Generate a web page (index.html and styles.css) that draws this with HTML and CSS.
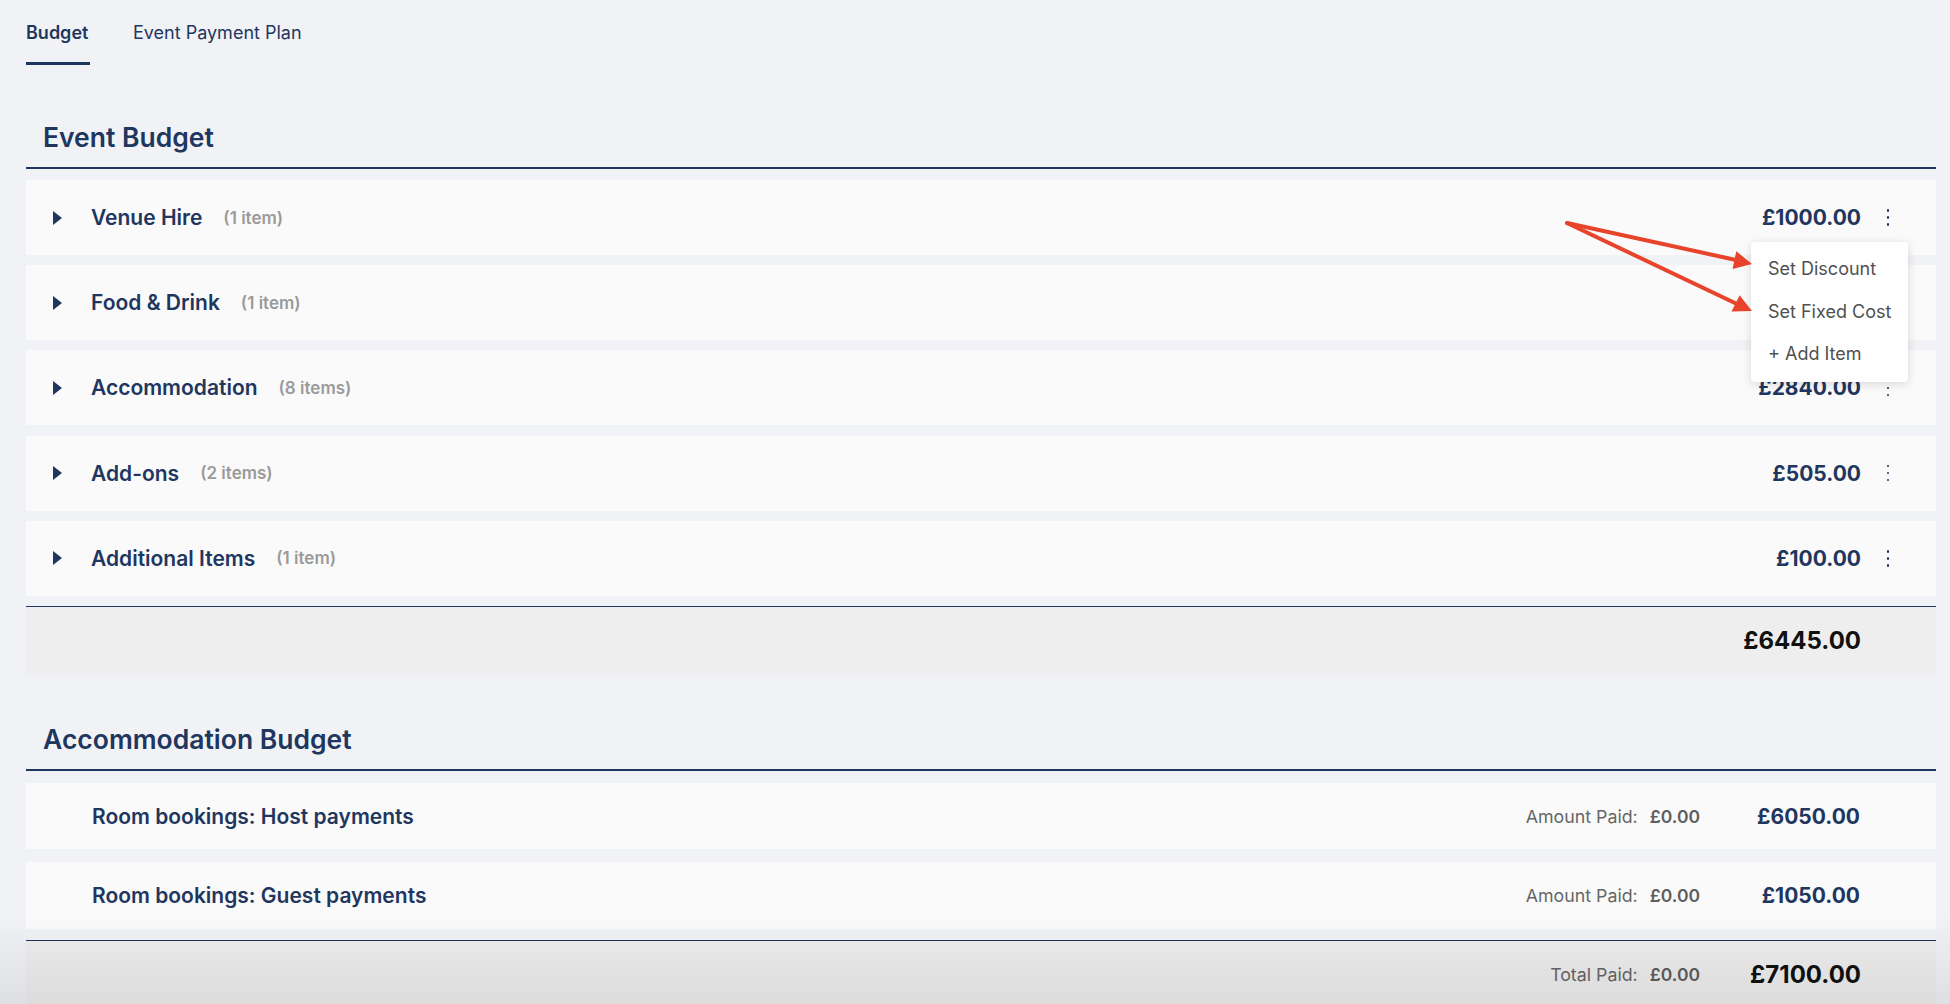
FILE: index.html
```html
<!DOCTYPE html>
<html lang="en">
<head>
<meta charset="utf-8">
<title>Budget</title>
<link rel="stylesheet" href="styles.css">
</head>
<body>
<div class="page">
  <nav class="tabs">
    <div class="tab tab-active">Budget</div>
    <div class="tab">Event Payment Plan</div>
  </nav>

  <section class="section section-event">
    <h2 class="section-title">Event Budget</h2>
    <div class="rows">
      <div class="row row-open">
        <span class="caret"></span>
        <span class="row-title">Venue Hire</span>
        <span class="row-count">(1 item)</span>
        <span class="row-amount">£1000.00</span>
        <span class="kebab"><i></i><i></i><i></i></span>
        <div class="menu">
          <div class="menu-item">Set Discount</div>
          <div class="menu-item">Set Fixed Cost</div>
          <div class="menu-item">+ Add Item</div>
        </div>
      </div>
      <div class="row">
        <span class="caret"></span>
        <span class="row-title">Food &amp; Drink</span>
        <span class="row-count">(1 item)</span>
        <span class="row-amount row-amount-hidden">£2000.00</span>
        <span class="kebab kebab-hidden"><i></i><i></i><i></i></span>
      </div>
      <div class="row">
        <span class="caret"></span>
        <span class="row-title">Accommodation</span>
        <span class="row-count">(8 items)</span>
        <span class="row-amount">£2840.00</span>
        <span class="kebab"><i></i><i></i><i></i></span>
      </div>
      <div class="row">
        <span class="caret"></span>
        <span class="row-title">Add-ons</span>
        <span class="row-count">(2 items)</span>
        <span class="row-amount">£505.00</span>
        <span class="kebab"><i></i><i></i><i></i></span>
      </div>
      <div class="row">
        <span class="caret"></span>
        <span class="row-title">Additional Items</span>
        <span class="row-count">(1 item)</span>
        <span class="row-amount">£100.00</span>
        <span class="kebab"><i></i><i></i><i></i></span>
      </div>
    </div>
    <div class="total total-event">
      <span class="total-amount">£6445.00</span>
    </div>
  </section>

  <section class="section section-acc">
    <h2 class="section-title">Accommodation Budget</h2>
    <div class="rows rows-acc">
      <div class="row row-acc">
        <span class="row-title">Room bookings: Host payments</span>
        <span class="paid-label">Amount Paid:</span>
        <span class="paid-value">£0.00</span>
        <span class="acc-amount">£6050.00</span>
      </div>
      <div class="row row-acc">
        <span class="row-title">Room bookings: Guest payments</span>
        <span class="paid-label">Amount Paid:</span>
        <span class="paid-value">£0.00</span>
        <span class="acc-amount">£1050.00</span>
      </div>
    </div>
    <div class="total total-acc">
      <span class="paid-label">Total Paid:</span>
      <span class="paid-value">£0.00</span>
      <span class="total-amount">£7100.00</span>
    </div>
  </section>
</div>

<svg class="annotation" width="1950" height="1004" viewBox="0 0 1950 1004">
  <g stroke="#e8432b" stroke-width="4" stroke-linecap="round" fill="none">
    <line x1="1567" y1="223" x2="1736" y2="260"/>
    <line x1="1567" y1="223" x2="1737" y2="304"/>
  </g>
  <g fill="#e8432b">
    <polygon points="1752,264 1732.5,269 1736.3,251.3"/>
    <polygon points="1752,311 1731.5,311.5 1739.6,295.2"/>
  </g>
</svg>
<div class="bottom-fade"></div>
</body>
</html>
```

FILE: styles.css
```css
html, body {
  margin: 0;
  padding: 0;
  overflow: hidden;
}
body {
  background: #f0f2f5;
  font-family: Inter, "Noto Sans", "Liberation Sans", sans-serif;
  color: #1f365f;
  height: 1004px;
  position: relative;
}
.page {
  padding: 0 14px 0 26px;
}

/* Tabs */
.tabs {
  display: flex;
  gap: 43px;
  height: 65px;
}
.tab {
  font-size: 18px;
  line-height: 22px;
  padding-top: 22px;
  color: #1f365f;
  box-sizing: border-box;
  height: 65px;
}
.tab-active {
  font-weight: 600;
  border-bottom: 3px solid #1f365f;
  width: 64px;
}

/* Section */
.section-title {
  margin: 0;
  font-size: 26.5px;
  line-height: 34px;
  font-weight: 600;
  padding: 0 0 13px 17px;
  border-bottom: 2px solid #1f365f;
  color: #1f365f;
}
.section-event {
  margin-top: 55px;
}
.section-acc {
  margin-top: 47px;
}

.rows {
  display: flex;
  flex-direction: column;
  gap: 10.2px;
  margin-top: 11px;
}
.row {
  position: relative;
  display: flex;
  align-items: center;
  height: 75px;
  background: #fafafa;
  padding: 0 36px 0 27px;
}
.caret {
  width: 0;
  height: 0;
  border-top: 7px solid transparent;
  border-bottom: 7px solid transparent;
  border-left: 9px solid #1f365f;
  margin-right: 29px;
}
.row-title {
  font-size: 21px;
  font-weight: 600;
  color: #1f365f;
}
.row-count {
  margin-left: 21px;
  font-size: 17px;
  font-weight: 600;
  color: #9a9a9a;
}
.row-amount {
  margin-left: auto;
  font-size: 21px;
  font-weight: 700;
  color: #1f365f;
}
.kebab {
  width: 24px;
  margin-left: 15px;
  display: flex;
  flex-direction: column;
  align-items: center;
  gap: 4.5px;
}
.kebab i {
  display: block;
  width: 2.5px;
  height: 2.5px;
  background: #1f365f;
  border-radius: 1px;
}
.row-amount-hidden,
.kebab-hidden {
  visibility: hidden;
}

/* Dropdown */
.menu {
  position: absolute;
  top: 62px;
  right: 28px;
  width: 157px;
  background: #ffffff;
  border-radius: 4px;
  box-shadow: 0 2px 10px rgba(0, 0, 0, 0.14);
  padding: 6px 0;
  z-index: 5;
}
.menu-item {
  font-size: 18px;
  line-height: 42.5px;
  padding-left: 17px;
  color: #505050;
  white-space: nowrap;
}

/* Totals */
.total {
  display: flex;
  align-items: center;
  justify-content: flex-end;
  margin-top: 10px;
  height: 68px;
  background: #eeeeee;
  border-top: 1px solid #1f365f;
  padding-right: 75px;
}
.total-amount {
  font-size: 24px;
  font-weight: 700;
  color: #111111;
}

/* Accommodation */
.rows-acc {
  gap: 13px;
  margin-top: 12px;
}
.row-acc {
  height: 66.5px;
  padding: 0 76px 0 66px;
}
.paid-label {
  margin-left: auto;
  font-size: 17.8px;
  color: #666666;
}
.paid-value {
  margin-left: 12px;
  font-size: 17.5px;
  font-weight: 600;
  color: #5e5e5e;
}
.acc-amount {
  margin-left: 50px;
  width: 110px;
  text-align: right;
  font-size: 21px;
  font-weight: 700;
  color: #1f365f;
}
.total-acc {
  margin-top: 11px;
}
.total-acc .total-amount {
  margin-left: 41px;
  width: 120px;
  text-align: right;
}

/* Overlays */
.annotation {
  position: absolute;
  left: 0;
  top: 0;
  pointer-events: none;
  z-index: 10;
}
.bottom-fade {
  position: fixed;
  left: 0;
  right: 0;
  bottom: 0;
  height: 90px;
  background: linear-gradient(to bottom, rgba(0, 0, 0, 0), rgba(0, 0, 0, 0.075));
  pointer-events: none;
  z-index: 8;
}
```
